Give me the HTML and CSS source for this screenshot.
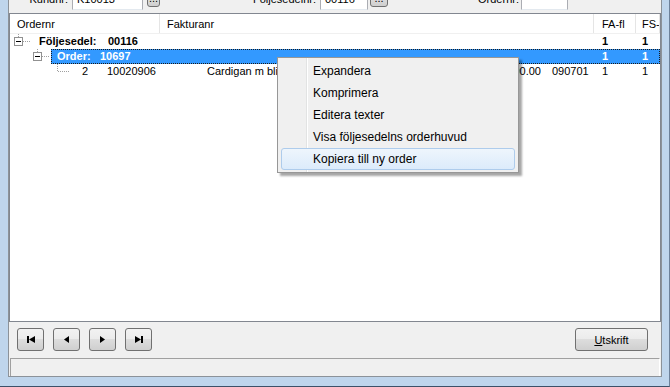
FILE: index.html
```html
<!DOCTYPE html>
<html lang="sv">
  <head>
    <meta charset="UTF-8" />
    <title>Följesedel</title>
    <link rel="stylesheet" href="styles.css">
  </head>
  <body>
    <div class="window">
      <div class="form">
        <div class="toolbar">
          <label class="lbl lbl-kund">Kundnr:</label>
          <div class="field field-kund">K10013</div>
          <button class="dots dots-kund">...</button>
          <label class="lbl lbl-fs">Följesedelnr:</label>
          <div class="field field-fs">00116</div>
          <button class="dots dots-fs">...</button>
          <label class="lbl lbl-order">Ordernr:</label>
          <div class="field field-order"></div>
        </div>

        <div class="list">
          <div class="list-head">
            <div class="col col-1">Ordernr</div>
            <div class="col col-2">Fakturanr</div>
            <div class="col col-3">FA-fl</div>
            <div class="col col-4">FS-f</div>
          </div>

          <div class="row bold">
            <svg class="tree" width="27" height="15">
              <path d="M8.5 0V3" class="dot" />
              <path d="M13 7.5H21" class="dot" />
              <rect x="4.5" y="3.5" width="8" height="8" class="box" />
              <path d="M6 7.5H11" class="minus" />
            </svg>
            <div class="cell label-1"><span class="key key-fs">Följesedel:</span>00116</div>
            <div class="cell fa">1</div>
            <div class="cell fs">1</div>
          </div>

          <div class="row bold">
            <svg class="tree" width="41" height="15">
              <path d="M27.5 0V3" class="dot" />
              <path d="M32 7.5H40" class="dot" />
              <rect x="23.5" y="3.5" width="8" height="8" class="box" />
              <path d="M25 7.5H30" class="minus" />
            </svg>
            <div class="sel">
              <div class="cell label-2"><span class="key key-order">Order:</span>10697</div>
              <div class="cell fa">1</div>
              <div class="cell fs">1</div>
            </div>
          </div>

          <div class="row">
            <svg class="tree" width="60" height="15">
              <path d="M47.5 0V7" class="dot" />
              <path d="M48 7.5H59" class="dot" />
            </svg>
            <div class="cell c-nr">2</div>
            <div class="cell c-art">10020906</div>
            <div class="cell c-desc">Cardigan m blixtlås</div>
            <div class="cell c-amt">190.00</div>
            <div class="cell c-date">090701</div>
            <div class="cell fa">1</div>
            <div class="cell fs">1</div>
          </div>
        </div>

        <div class="nav">
          <button class="btn btn-nav">
            <svg width="8" height="7"><rect x="0" y="0" width="2" height="7" /><polygon points="8,0 8,7 2,3.5" /></svg>
          </button>
          <button class="btn btn-nav">
            <svg width="5" height="7"><polygon points="5,0 5,7 0,3.5" /></svg>
          </button>
          <button class="btn btn-nav">
            <svg width="5" height="7"><polygon points="0,0 0,7 5,3.5" /></svg>
          </button>
          <button class="btn btn-nav">
            <svg width="8" height="7"><polygon points="0,0 0,7 6,3.5" /><rect x="6" y="0" width="2" height="7" /></svg>
          </button>
          <button class="btn btn-print"><u>U</u>tskrift</button>
        </div>

        <div class="status"></div>
      </div>
    </div>

    <div class="menu">
      <div class="menu-item">Expandera</div>
      <div class="menu-item">Komprimera</div>
      <div class="menu-item">Editera texter</div>
      <div class="menu-item">Visa följesedelns orderhuvud</div>
      <div class="menu-item hover">Kopiera till ny order</div>
    </div>
  </body>
</html>
```

FILE: styles.css
```css
* {
    box-sizing: border-box;
}

body {
    margin: 0;
    width: 670px;
    height: 387px;
    overflow: hidden;
    background: #bfd5ec;
    font-family: "Liberation Sans", Arial, sans-serif;
    font-size: 11px;
    color: #000;
}

.window {
    height: 387px;
    padding: 0 7px 10px 8px;
    border-right: 1px solid #6d819a;
    border-bottom: 1px solid #3d5068;
}

.form {
    height: 377px;
    background: #f0f0f0;
    border-left: 1px solid #8c9299;
    border-right: 1px solid #8c9299;
    border-bottom: 1px solid #8c9299;
    display: flex;
    flex-direction: column;
}

/* top fields, scrolled half out of view */
.toolbar {
    display: flex;
    align-items: flex-end;
    height: 21px;
    margin-top: -11px;
    flex-shrink: 0;
}

.lbl {
    text-align: right;
    line-height: 14px;
    padding-bottom: 4px;
}

.lbl-kund { width: 59px; }
.lbl-fs { width: 156px; }
.lbl-order { width: 131px; }

.field {
    height: 21px;
    background: #fff;
    border: 1px solid #abadb3;
    border-bottom-color: #e3e9ef;
    padding: 3px 4px;
    line-height: 13px;
}

.field-kund { width: 71px; margin-left: 4px; }
.field-fs { width: 48px; margin-left: 4px; }
.field-order { width: 47px; margin-left: 2px; }

.dots {
    height: 18px;
    margin-bottom: 3px;
    padding: 0;
    border: 1px solid #707070;
    border-radius: 3px;
    background: linear-gradient(#f2f2f2 0%, #ebebeb 50%, #dddddd 50%, #cfcfcf 100%);
    font-family: "Liberation Sans", Arial, sans-serif;
    font-size: 11px;
    line-height: 10px;
}

.dots-kund { width: 13px; margin-left: 4px; }
.dots-fs { width: 18px; margin-left: 2px; }

/* list view */
.list {
    margin-top: 3px;
    height: 309px;
    background: #fff;
    border: 1px solid #828790;
    overflow: hidden;
    flex-shrink: 0;
}

.list-head {
    display: flex;
    height: 20px;
    border-bottom: 1px solid #f0f0f0;
}

.list-head .col {
    line-height: 18px;
    padding-top: 1px;
    border-right: 1px solid #e5e5e5;
    white-space: nowrap;
    overflow: hidden;
}

.col-1 { width: 150px; padding-left: 7px; }
.col-2 { width: 434px; padding-left: 7px; }
.col-3 { width: 42px; padding-left: 8px; }
.col-4 { flex: 1; padding-left: 6px; }

.row {
    display: flex;
    height: 15px;
    line-height: 15px;
    white-space: nowrap;
}

.row.bold {
    font-weight: bold;
}

.tree {
    display: block;
    flex-shrink: 0;
    shape-rendering: crispEdges;
}

.tree .dot {
    stroke: #a0a0a0;
    stroke-dasharray: 1 1;
    fill: none;
}

.tree .box {
    fill: #fff;
    stroke: #919191;
}

.tree .minus {
    stroke: #000;
}

.cell {
    overflow: hidden;
    flex-shrink: 0;
}

.key {
    display: inline-block;
}

.key-fs { width: 69px; }
.key-order { width: 43px; }

.label-1 { width: 557px; padding-left: 2px; }
.label-2 { width: 543px; padding-left: 6px; }

.fa { width: 42px; padding-left: 8px; }
.fs { flex: 1; padding-left: 6px; }

.sel {
    flex: 1;
    display: flex;
    background: #3399ff;
    color: #fff;
    outline: 1px dotted #1a1a1a;
    outline-offset: -1px;
}

.c-nr { width: 18px; text-align: right; }
.c-art { width: 100px; padding-left: 19px; }
.c-desc { width: 300px; padding-left: 19px; }
.c-amt { width: 53px; text-align: right; }
.c-date { width: 53px; padding-left: 11px; }

/* bottom buttons */
.nav {
    display: flex;
    gap: 9px;
    margin-top: 6px;
    padding-left: 8px;
    flex-shrink: 0;
}

.btn {
    height: 23px;
    padding: 0;
    border: 1px solid #707070;
    border-radius: 3px;
    background: linear-gradient(#f2f2f2 0%, #ebebeb 50%, #dddddd 50%, #cfcfcf 100%);
    font-family: "Liberation Sans", Arial, sans-serif;
    font-size: 11px;
    color: #000;
    display: flex;
    align-items: center;
    justify-content: center;
}

.btn-nav {
    width: 27px;
}

.btn-nav svg {
    display: block;
    fill: #000;
}

.btn-print {
    width: 73px;
    margin-left: auto;
    margin-right: 13px;
}

.status {
    margin: 7px 1px 0 1px;
    flex: 1;
    border-top: 1px solid #a0a0a0;
    border-left: 1px solid #a0a0a0;
    border-right: 1px solid #fff;
}

/* context menu */
.menu {
    position: absolute;
    left: 277px;
    top: 57px;
    width: 242px;
    height: 116px;
    padding: 2px 3px;
    background: #f0f0f0 linear-gradient(90deg, transparent 28px, #e2e3e3 28px, #e2e3e3 29px, #fff 29px, #fff 30px, transparent 30px);
    border: 1px solid #979797;
    box-shadow: 3px 3px 2px rgba(0, 0, 0, 0.35);
    font-size: 12px;
}

.menu-item {
    height: 22px;
    line-height: 20px;
    padding-left: 31px;
    border: 1px solid transparent;
    border-radius: 3px;
}

.menu-item.hover {
    border-color: #aeccec;
    background: linear-gradient(#eef5fc, #dcebfb);
}
```
